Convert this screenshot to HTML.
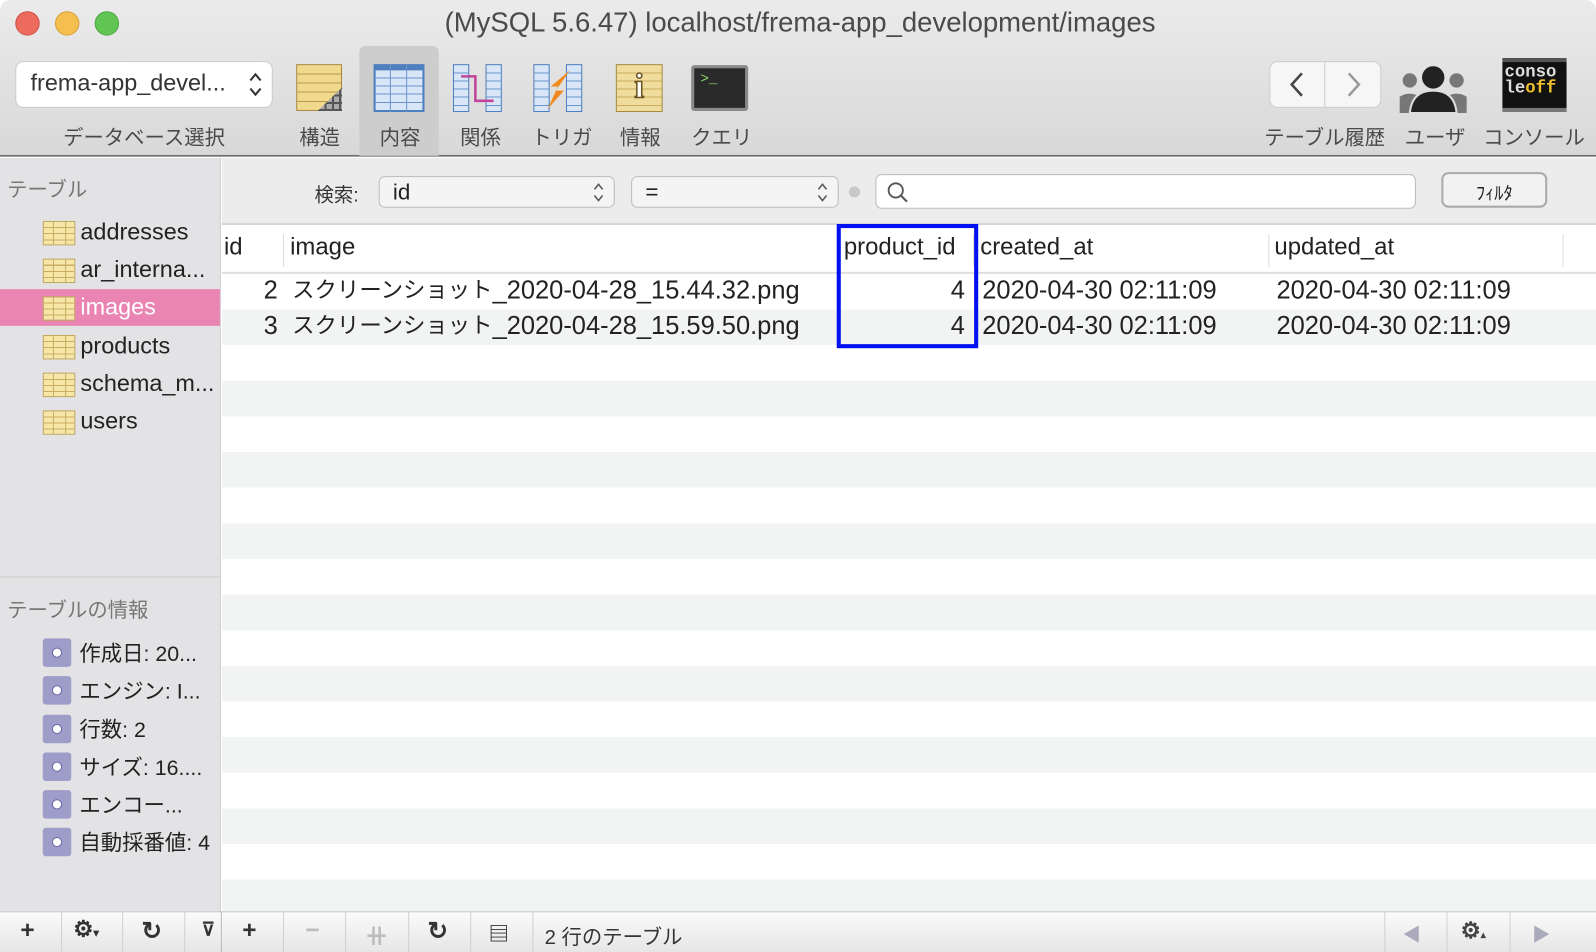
<!DOCTYPE html>
<html><head><meta charset="utf-8"><style>
*{box-sizing:border-box;margin:0;padding:0}
html,body{width:1596px;height:952px;overflow:hidden;background:#fff}
#w{position:absolute;left:0;top:0;width:1568px;height:935px;transform:scale(1.0179,1.0182);transform-origin:0 0;font-family:"Liberation Sans","Noto Sans CJK JP",sans-serif;color:#222}
.a{position:absolute}
.tb{left:0;top:0;width:1568px;height:154px;background:linear-gradient(#ebebeb,#d8d8d8);border-bottom:2px solid #6f6f6f;border-radius:10px 10px 0 0}
.dot{width:24px;height:24px;border-radius:50%;top:11px}
.lbl{font-size:20px;color:#4a4a4a;top:119px;white-space:nowrap}
.side{left:0;top:155px;width:217px;height:740px;background:#e3e3e5;border-right:1px solid #cfcfcf}
.ti{left:42px;font-size:23px;white-space:nowrap}
.tico{position:absolute;left:0;top:3px;width:32px;height:24px;border:1px solid #c4a860;background:repeating-linear-gradient(#f6e6a8 0 5px,#c9ad62 5px 6px);}
.tico:after{content:"";position:absolute;left:9px;top:0;width:11px;height:100%;border-left:1px solid #c9ad62;border-right:1px solid #c9ad62}
.ii{left:42px;font-size:21px;white-space:nowrap}
.ii i{position:absolute;left:0;top:1px;width:28px;height:28px;background:#9e9cc8;border-radius:3px}
.ii i:after{content:"";position:absolute;left:9px;top:9px;width:10px;height:10px;border-radius:50%;background:#fff;border:1px solid #6a68a0;box-sizing:border-box}
.ii span{margin-left:36px}
.row{left:218px;width:1350px;height:35px}
.cell{position:absolute;font-size:25px;top:0;line-height:34px;white-space:nowrap}
.cell .j{font-size:22px;vertical-align:top}
.hd{position:absolute;top:229px;font-size:23.5px}
.bb{top:895px;height:40px;background:linear-gradient(#fafafa,#e6e6e6);border-top:1px solid #c6c6c6}
.bs{position:absolute;top:0;width:1px;height:40px;background:#d0d0d0}
.bi{position:absolute;top:5px;font-size:24px;color:#333;font-weight:bold}
</style></head><body><div id="w">
<div class="a tb"></div>
<div class="a dot" style="left:15px;background:#ed6a5e;border:1px solid #d2524a"></div>
<div class="a dot" style="left:54px;background:#f5bf4f;border:1px solid #d9a13a"></div>
<div class="a dot" style="left:93px;background:#61c554;border:1px solid #4ca840"></div>
<div class="a" style="left:0;width:1572px;top:7px;text-align:center;font-size:27px;color:#4a4a4a">(MySQL 5.6.47) localhost/frema-app_development/images</div>
<div class="a" style="left:16px;top:61px;width:251px;height:44px;background:#fff;border-radius:7px;box-shadow:0 0 0 1px #ccc;font-size:23px;padding:7px 0 0 14px;color:#333">frema-app_devel...<svg style="position:absolute;right:8px;top:7px" width="16" height="30"><path d="M3 11 L8 5 L13 11 M3 19 L8 25 L13 19" stroke="#333" stroke-width="2" fill="none"/></svg></div>
<div class="a lbl" style="left:62px">データベース選択</div>
<div class="a" style="left:353px;top:45px;width:78px;height:108px;background:#cdcdcd;border-radius:6px 6px 0 0"></div>
<div class="a" style="left:291px;top:63px;width:45px;height:46px;background:repeating-linear-gradient(#f0d88c 0 8px,#b89a48 8px 9px);border:1px solid #a88a3c"></div>
<div class="a" style="left:312px;top:86px;width:24px;height:23px;background:repeating-linear-gradient(90deg,#555 0 2px,transparent 2px 7px),repeating-linear-gradient(#555 0 2px,#aaa 2px 7px);clip-path:polygon(100% 0,100% 100%,0 100%)"></div>
<div class="a" style="left:367px;top:63px;width:50px;height:47px;background:repeating-linear-gradient(#d8e6f8 0 7px,#6a96cc 7px 8px);border:2px solid #4e7fbf;border-top:6px solid #4e7fbf"></div>
<div class="a" style="left:383px;top:63px;width:17px;height:47px;border-left:1px solid #6a96cc;border-right:1px solid #6a96cc"></div>
<div class="a" style="left:445px;top:63px;width:16px;height:47px;background:repeating-linear-gradient(#d8e6f8 0 7px,#6a96cc 7px 8px);border:1px solid #4e7fbf"></div>
<div class="a" style="left:477px;top:63px;width:16px;height:47px;background:repeating-linear-gradient(#d8e6f8 0 7px,#6a96cc 7px 8px);border:1px solid #4e7fbf"></div>
<svg class="a" style="left:445px;top:63px" width="50" height="48"><path d="M8 12 H22 V36 H40" stroke="#c2449a" stroke-width="2.5" fill="none"/></svg>
<div class="a" style="left:524px;top:63px;width:16px;height:47px;background:repeating-linear-gradient(#d8e6f8 0 7px,#6a96cc 7px 8px);border:1px solid #4e7fbf"></div>
<div class="a" style="left:556px;top:63px;width:16px;height:47px;background:repeating-linear-gradient(#d8e6f8 0 7px,#6a96cc 7px 8px);border:1px solid #4e7fbf"></div>
<svg class="a" style="left:524px;top:63px" width="50" height="48"><path d="M36 6 L22 26 L30 26 L14 44 L24 22 L17 22 Z" fill="#f08a20"/></svg>
<div class="a" style="left:605px;top:63px;width:46px;height:47px;background:repeating-linear-gradient(#f0dc9c 0 7px,#c8ac5c 7px 8px);border:1px solid #a88a3c"></div>
<div class="a" style="left:619px;top:66px;width:18px;height:40px;text-align:center;font:bold 34px 'Liberation Serif',serif;color:#fff;-webkit-text-stroke:1.5px #6a5420;line-height:40px">i</div>
<div class="a" style="left:679px;top:64px;width:56px;height:45px;background:#2a2a2a;border:3px solid #8a8a8a;border-radius:3px;color:#8fd86a;font:14px 'Liberation Mono',monospace;padding:3px 6px">&gt;_</div>
<div class="a lbl" style="left:294px">構造</div>
<div class="a lbl" style="left:373px">内容</div>
<div class="a lbl" style="left:452px">関係</div>
<div class="a lbl" style="left:522px">トリガ</div>
<div class="a lbl" style="left:609px">情報</div>
<div class="a lbl" style="left:679px">クエリ</div>
<div class="a" style="left:1248px;top:61px;width:108px;height:44px;background:#f6f6f6;border-radius:7px;box-shadow:0 0 0 1px #ccc"></div>
<div class="a" style="left:1301px;top:61px;width:1px;height:44px;background:#ccc"></div>
<svg class="a" style="left:1248px;top:61px" width="108" height="44"><path d="M31 11 L21 22 L31 33" stroke="#444" stroke-width="2.5" fill="none"/><path d="M77 11 L87 22 L77 33" stroke="#999" stroke-width="2.5" fill="none"/></svg>
<svg class="a" style="left:1375px;top:65px" width="66" height="46"><circle cx="10" cy="14" r="7" fill="#777"/><circle cx="56" cy="14" r="7" fill="#777"/><path d="M0 46 V30 Q10 24 20 30 V46Z M46 46 V30 Q56 24 66 30 V46Z" fill="#777"/><circle cx="33" cy="11" r="11" fill="#222"/><path d="M10 46 Q12 24 33 24 Q54 24 56 46Z" fill="#222" stroke="#ddd" stroke-width="2"/></svg>
<div class="a" style="left:1476px;top:57px;width:63px;height:53px;background:#111;border-top:4px solid #555;border-bottom:4px solid #777;font:bold 17px 'Liberation Mono',monospace;line-height:16px;color:#ddd;padding:3px 2px">conso<br>le<span style="color:#f0c030">off</span></div>
<div class="a lbl" style="left:1242px">テーブル履歴</div>
<div class="a lbl" style="left:1380px">ユーザ</div>
<div class="a lbl" style="left:1457px">コンソール</div>
<div class="a side"></div>
<div class="a" style="left:7px;top:170px;font-size:20px;color:#777">テーブル</div>
<div class="a" style="left:0;top:284px;width:216px;height:36px;background:#ea84b3"></div>
<div class="a ti" style="top:214px"><div class="tico"></div><span style="margin-left:37px">addresses</span></div>
<div class="a ti" style="top:251px"><div class="tico"></div><span style="margin-left:37px">ar_interna...</span></div>
<div class="a ti" style="top:288px;color:#fff"><div class="tico"></div><span style="margin-left:37px">images</span></div>
<div class="a ti" style="top:326px"><div class="tico"></div><span style="margin-left:37px">products</span></div>
<div class="a ti" style="top:363px"><div class="tico"></div><span style="margin-left:37px">schema_m...</span></div>
<div class="a ti" style="top:400px"><div class="tico"></div><span style="margin-left:37px">users</span></div>
<div class="a" style="left:0;top:566px;width:216px;height:1px;background:#d0d0d0"></div>
<div class="a" style="left:7px;top:583px;font-size:20px;color:#777">テーブルの情報</div>
<div class="a ii" style="top:626px"><i></i><span>作成日: 20...</span></div>
<div class="a ii" style="top:663px"><i></i><span>エンジン: I...</span></div>
<div class="a ii" style="top:701px"><i></i><span>行数: 2</span></div>
<div class="a ii" style="top:738px"><i></i><span>サイズ: 16....</span></div>
<div class="a ii" style="top:775px"><i></i><span>エンコー...</span></div>
<div class="a ii" style="top:812px"><i></i><span>自動採番値: 4</span></div>
<div class="a" style="left:218px;top:155px;width:1350px;height:66px;background:#ececec;border-bottom:2px solid #d6d6d6"></div>
<div class="a" style="left:309px;top:177px;font-size:19px;color:#333">検索:</div>
<div class="a" style="left:372px;top:173px;width:232px;height:31px;background:#f4f4f4;border:1px solid #bbb;border-radius:6px;font-size:22px;padding:2px 0 0 13px">id<svg style="position:absolute;right:8px;top:2px" width="14" height="26"><path d="M3 10 L7 5 L11 10 M3 16 L7 21 L11 16" stroke="#555" stroke-width="1.5" fill="none"/></svg></div>
<div class="a" style="left:620px;top:173px;width:204px;height:31px;background:#f4f4f4;border:1px solid #bbb;border-radius:6px;font-size:22px;padding:2px 0 0 13px">=<svg style="position:absolute;right:8px;top:2px" width="14" height="26"><path d="M3 10 L7 5 L11 10 M3 16 L7 21 L11 16" stroke="#555" stroke-width="1.5" fill="none"/></svg></div>
<div class="a" style="left:834px;top:183px;width:11px;height:11px;border-radius:50%;background:#c8c8c8"></div>
<div class="a" style="left:860px;top:171px;width:531px;height:34px;background:#fff;border:1px solid #bbb;border-radius:6px"></div>
<svg class="a" style="left:870px;top:177px" width="24" height="24"><circle cx="10" cy="10" r="7" stroke="#555" stroke-width="1.8" fill="none"/><path d="M15 15 L21 21" stroke="#555" stroke-width="2"/></svg>
<div class="a" style="left:1416px;top:169px;width:104px;height:35px;background:#f2f2f2;border:2px solid #aaa;border-radius:7px;text-align:center;font-size:18px;padding-top:5px">ﾌｨﾙﾀ</div>
<div class="a" style="left:218px;top:222px;width:1350px;height:47px;background:#fff;border-bottom:2px solid #ddd"></div>
<div class="a" style="left:278px;top:230px;width:1px;height:32px;background:#ddd"></div>
<div class="a" style="left:956px;top:230px;width:1px;height:32px;background:#ddd"></div>
<div class="a" style="left:1246px;top:230px;width:1px;height:32px;background:#ddd"></div>
<div class="a" style="left:1535px;top:230px;width:1px;height:32px;background:#ddd"></div>
<div class="hd" style="left:220px">id</div>
<div class="hd" style="left:285px">image</div>
<div class="hd" style="left:829px">product_id</div>
<div class="hd" style="left:963px">created_at</div>
<div class="hd" style="left:1252px">updated_at</div>
<div class="a" style="left:218px;top:269px;width:1350px;height:626px;background:repeating-linear-gradient(#fff 0 35px,#f2f3f3 35px 70px)"></div>
<div class="a row" style="top:268px"><span class="cell" style="left:41px">2</span><span class="cell" style="left:69px"><span class="j">スクリーンショット</span>_2020-04-28_15.44.32.png</span><span class="cell" style="left:716px">4</span><span class="cell" style="left:747px">2020-04-30 02:11:09</span><span class="cell" style="left:1036px">2020-04-30 02:11:09</span></div>
<div class="a row" style="top:303px"><span class="cell" style="left:41px">3</span><span class="cell" style="left:69px"><span class="j">スクリーンショット</span>_2020-04-28_15.59.50.png</span><span class="cell" style="left:716px">4</span><span class="cell" style="left:747px">2020-04-30 02:11:09</span><span class="cell" style="left:1036px">2020-04-30 02:11:09</span></div>
<div class="a" style="left:822px;top:220px;width:139px;height:122px;border:4px solid #0010f0"></div>
<div class="a bb" style="left:0;width:1568px"></div>
<div class="bs" style="left:60px;top:895px"></div><div class="bs" style="left:120px;top:895px"></div><div class="bs" style="left:181px;top:895px"></div><div class="bs" style="left:217px;top:895px;background:#bbb"></div><div class="bs" style="left:278px;top:895px"></div><div class="bs" style="left:339px;top:895px"></div><div class="bs" style="left:401px;top:895px"></div><div class="bs" style="left:462px;top:895px"></div><div class="bs" style="left:523px;top:895px"></div><div class="bs" style="left:1360px;top:895px"></div><div class="bs" style="left:1421px;top:895px"></div><div class="bs" style="left:1483px;top:895px"></div>
<div class="bi" style="left:20px;top:900px">+</div>
<div class="bi" style="left:72px;top:900px;font-size:22px">⚙<span style="font-size:11px">▾</span></div>
<div class="bi" style="left:139px;top:900px">↻</div>
<div class="bi" style="left:198px;top:903px;font-size:18px">⊽</div>
<div class="bi" style="left:238px;top:900px">+</div>
<div class="bi" style="left:300px;top:900px;color:#bbb">−</div>
<div class="bi" style="left:358px;top:900px;color:#bbb">⧺</div>
<div class="bi" style="left:420px;top:900px">↻</div>
<div class="bi" style="left:480px;top:901px;font-size:20px">▤</div>
<div class="a" style="left:535px;top:904px;font-size:20px;color:#333">2 行のテーブル</div>
<div class="bi" style="left:1378px;top:904px;font-size:18px;color:#aab">◀</div>
<div class="bi" style="left:1435px;top:901px;font-size:22px;color:#444">⚙<span style="font-size:10px">▴</span></div>
<div class="bi" style="left:1505px;top:904px;font-size:18px;color:#aab">▶</div>
</div></body></html>
